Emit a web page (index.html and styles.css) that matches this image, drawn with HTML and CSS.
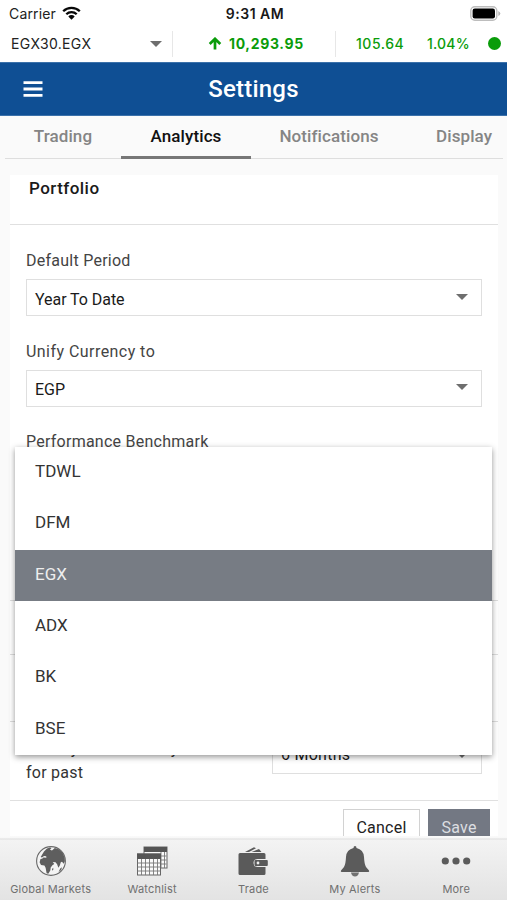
FILE: index.html
```html
<!DOCTYPE html>
<html lang="en">
<head>
<meta charset="utf-8">
<meta name="viewport" content="width=device-width, initial-scale=1">
<title>Settings</title>
<link rel="stylesheet" href="styles.css">
</head>
<body>
<div class="app">
  <div class="status">
    <div class="carrier"><span>Carrier</span>
      <svg width="19" height="14" viewBox="0 0 19 14"><g fill="none" stroke="#080808" stroke-width="2.3"><path d="M1.2 5.2a11.8 11.8 0 0 1 16.6 0"/><path d="M4.3 8.3a7.4 7.4 0 0 1 10.4 0"/></g><path d="M6.3 10.4a4.5 4.5 0 0 1 6.4 0L9.5 13.7z" fill="#080808"/></svg>
    </div>
    <span class="clock">9:31 AM</span>
    <svg class="battery" width="31" height="15" viewBox="0 0 31 15"><rect x=".8" y=".8" width="26" height="13.4" rx="4" fill="#fff" stroke="#bdbdbd" stroke-width="1.4"/><rect x="2.6" y="2.6" width="22.4" height="9.8" rx="2.2" fill="#000"/><path d="M28.3 5v5q2-1 2-2.5t-2-2.5z" fill="#b5b5b5"/></svg>
  </div>
  <div class="ticker">
    <div class="symbol"><span>EGX30.EGX</span><i class="caret"></i></div>
    <div class="price"><svg width="14" height="13" viewBox="0 0 14 13"><path d="M7 12.5V2M1.7 7 7 1.8 12.3 7" fill="none" stroke="#0a9c0a" stroke-width="2.7"/></svg><span>10,293.95</span></div>
    <div class="change"><span class="points">105.64</span><span class="percent">1.04%</span><i class="dot"></i></div>
  </div>
  <header class="header">
    <svg width="20" height="18" viewBox="0 0 20 18"><path d="M.5 2.7h19M.5 9h19M.5 15.4h19" stroke="#fff" stroke-width="2.8"/></svg>
    <h1>Settings</h1>
  </header>
  <nav class="tabs">
    <span class="tab trading">Trading</span>
    <span class="tab active">Analytics</span>
    <span class="tab notifications">Notifications</span>
    <span class="tab display">Display</span>
  </nav>
  <main class="main">
    <section class="card">
      <h2>Portfolio</h2>
      <div class="fields">
        <label>Default Period</label>
        <div class="select"><span>Year To Date</span><i class="caret"></i></div>
        <label class="currency">Unify Currency to</label>
        <div class="select"><span>EGP</span><i class="caret"></i></div>
        <label>Performance Benchmark</label>
      </div>
      <div class="row row-a"></div>
      <div class="row row-b"></div>
      <div class="row row-c"></div>
      <div class="history">
        <p>History Cash Activity<br>for past</p>
        <div class="select"><span>6 Months</span><i class="caret"></i></div>
      </div>
      <div class="actions"><button class="cancel">Cancel</button><button class="save">Save</button></div>
    </section>
    <ul class="menu">
      <li>TDWL</li><li>DFM</li><li class="selected">EGX</li><li>ADX</li><li>BK</li><li>BSE</li>
    </ul>
  </main>
  <footer class="bottom">
    <div class="item"><svg width="32" height="32" viewBox="0 0 32 32"><circle cx="16" cy="16" r="14.4" fill="#f4f4f4" stroke="#686868" stroke-width="1.1"/><path fill="#5e5e5e" d="M9 6.500 12 3.500l3-.9 1.500.5-1.500 1.700 2 .6 2.800-2.300 4 1.100 3.800 3.600 2.100 4.600.2 3.800-1.200 2.600-1.700-2-1.200.5-1 3.200-1.400 2.300-1.300-3.500-1.600-2-2.800-.4 1.600 2-2.400 1.700-1.800-4-3.600-.3-2-1.300-2.100.5-.8-1.300 1.800-1.600 3 .2-.2-1.500-2.200-.3-2 1.500-1.300-.6zM5.500 14l4-.8 5.200 1.600 1.500 3.800 2 .7-2.500 3.200-.4 3-2 3.300-1.700-.5-1-5.600-1.200-2.200-3.400-.5-1.400-2.700zM17 24l1.200-1.300.2 1.900-1 1.200zM25.200 23.500l1.800-1.200-.8 2.700-2.700 2.300z"/></svg><span>Global Markets</span></div>
    <div class="item"><svg width="32" height="32" viewBox="0 0 32 32"><rect x="8" y="2" width="23" height="21" fill="#fafafa" stroke="#666"/><path d="M8 2h23v5H8z" fill="#555"/><path d="M8.5 11h22m-22 4h22m-22 4h22M25 7v16m3.5-16v16" stroke="#777" stroke-width=".9"/><rect x="1.5" y="9" width="23" height="21" fill="#fafafa" stroke="#666"/><path d="M1 8.500h24v5.500H1z" fill="#555"/><path d="M1.500 18h23m-23 4h23m-23 4h23M5.500 14v16m4-16v16m4-16v16m4-16v16m4-16v16" stroke="#777" stroke-width=".9"/></svg><span>Watchlist</span></div>
    <div class="item"><svg width="32" height="32" viewBox="0 0 32 32"><path fill="#5a5a5a" d="M1.500 9.500q0-1.500 1.500-1.500h24q1.500 0 1.500 1.500V14h-8q-4 0-4 4t4 4h8v6.500q0 1.500-1.500 1.500H3q-1.500 0-1.500-1.500z"/><rect x="17.500" y="15" width="13.300" height="6" rx="1" fill="#5a5a5a"/><circle cx="21" cy="18" r="1.400" fill="#eee"/><path fill="#5a5a5a" d="M8 7 17 2.300l2 .9L12 7zM14.500 7l7.500-3 2.500 3z"/></svg><span>Trade</span></div>
    <div class="item"><svg width="32" height="32" viewBox="0 0 32 32"><path fill="#5b5b5b" d="M14.500 3q0-2 1.500-2t1.500 2q7 1.500 7.500 9 .3 7 2 10l3 3.500q.8 1.500-1 1.500H3q-1.800 0-1-1.500L5 22q1.700-3 2-10 .5-7.500 7.500-9z"/><path fill="#707070" d="M12 27.500h8q-.8 4-4 4t-4-4z"/></svg><span>My Alerts</span></div>
    <div class="item"><svg width="32" height="32" viewBox="0 0 32 32"><g fill="#5b5b5b"><circle cx="5.300" cy="16" r="3.600"/><circle cx="16" cy="16" r="3.600"/><circle cx="26.700" cy="16" r="3.600"/></g></svg><span>More</span></div>
  </footer>
</div>
</body>
</html>
```
FILE: styles.css
```css
* { box-sizing: border-box; }
body { margin: 0; background: #fafafa; font-family: Roboto, "Liberation Sans", sans-serif; color: #333; }
.app { width: 507px; height: 900px; display: flex; flex-direction: column; overflow: hidden; background: #fafafa; }
svg { display: block; flex: none; }

.status { height: 28px; flex: none; display: grid; grid-template-columns: 1fr auto 1fr; align-items: center; padding: 0 6px 0 9px; background: #fff; font: 400 14px/28px Inter, sans-serif; color: #222; }
.carrier { display: flex; align-items: center; gap: 6px; letter-spacing: .15px; }
.carrier svg { margin-top: -3px; }
.clock { font-weight: 600; font-size: 14px; letter-spacing: .5px; color: #181818; }
.battery { justify-self: end; margin-top: -2px; }

.caret { width: 0; height: 0; border: 6px solid transparent; border-top: 6px solid #6e6e6e; border-bottom: 0; flex: none; }
.ticker { height: 34px; flex: none; display: flex; align-items: center; padding-bottom: 3px; background: #fff; font: 400 14px/26px Inter, sans-serif; color: #0a9c0a; }
.symbol { width: 173px; height: 26px; padding: 0 10px 0 11px; display: flex; align-items: center; justify-content: space-between; border-right: 1px solid #e7e7e7; color: #222; letter-spacing: .3px; }
.price { width: 163px; height: 26px; display: flex; align-items: center; padding-left: 35px; gap: 7px; font-weight: 700; letter-spacing: .65px; border-right: 1px solid #e7e7e7; }
.change { flex: 1; display: flex; align-items: center; padding: 0 6px 0 20px; font-weight: 500; }
.points { width: 71px; letter-spacing: .55px; }
.percent { letter-spacing: .2px; }
.dot { width: 13px; height: 13px; margin-left: auto; border-radius: 50%; background: #0a9c0a; }

.header { height: 54px; flex: none; display: grid; grid-template-columns: 1fr auto 1fr; align-items: center; padding: 0 23px; background: #0f4f94; border-top: 1px solid #3b71aa; border-bottom: 1px solid #3b71aa; color: #fff; }
.header h1 { margin: 0; font-size: 24px; font-weight: 500; line-height: 50px; letter-spacing: .2px; }

.tabs { height: 43px; flex: none; display: flex; margin: 0 4px 0 5px; border-bottom: 1px solid #dedede; font-size: 17px; font-weight: 500; line-height: 41px; color: #858585; letter-spacing: .1px; }
.tab { height: 43px; text-align: center; white-space: nowrap; flex: none; }
.trading { width: 116px; }
.active { width: 130px; color: #111; border-bottom: 3px solid #777; }
.notifications { width: 156px; }
.display { width: 90px; padding-left: 29px; text-align: left; }

.main { position: relative; height: 677px; flex: none; padding: 16px 9px 0 10px; overflow: hidden; }
.card { height: 661px; background: #fff; font-size: 16px; letter-spacing: .25px; }
.card h2 { height: 50px; margin: 0; padding-left: 19px; border-bottom: 1px solid #e0e0e0; font-size: 17px; font-weight: 500; line-height: 27px; letter-spacing: .45px; color: #1a1a1a; }
.fields { height: 376px; padding: 24px 16px 0; display: flex; flex-direction: column; border-bottom: 1px solid #ddd; }
.fields label { height: 24px; line-height: 24px; margin-bottom: 6px; color: #444; }
.fields .currency { letter-spacing: .45px; line-height: 23px; }
.select { height: 37px; display: flex; align-items: center; justify-content: space-between; padding: 3px 13px 0 8px; border: 1px solid #dfdfdf; color: #1a1a1a; background: #fff; letter-spacing: -.05px; }
.select .caret { margin-top: -5px; }
.fields .select { margin-bottom: 23.500px; flex: none; }
.row { border-bottom: 1px solid #ddd; background: #fff; }
.row-a { height: 54px; }
.row-b { height: 67px; }
.row-c { height: 14px; border: 0; }
.history { height: 65px; display: flex; justify-content: space-between; padding: 1px 16px 0; border-bottom: 1px solid #e0e0e0; }
.history p { margin: 0; line-height: 24px; color: #333; }
.history .select { width: 210px; padding-top: 0; padding-bottom: 3px; letter-spacing: .25px; }
.history .caret { margin-top: 1px; }
.actions { height: 36px; display: flex; justify-content: flex-end; gap: 8px; padding: 8px 8px 0 0; overflow: hidden; }
.actions button { height: 37px; padding: 0; border: 1px solid #d2d2d2; border-radius: 0; background: #fff; font: 400 16px/35px Roboto, sans-serif; letter-spacing: .25px; color: #222; flex: none; }
.actions .cancel { width: 77px; }
.actions .save { width: 62px; border-color: #737883; background: #737883; color: #dcdee1; }

.menu { position: absolute; left: 15px; top: 288px; width: 477px; height: 308px; margin: 0; padding: 0; list-style: none; background: #fff; box-shadow: 0 2px 6px rgba(0,0,0,.42); font-size: 17px; overflow: hidden; }
.menu li { height: 51.330px; padding-left: 20px; line-height: 49.500px; color: #333; }
.menu .selected { background: #777c84; color: #eee; }

.bottom { height: 64px; flex: none; display: grid; grid-template-columns: repeat(5, 1fr); padding-top: 9px; background: linear-gradient(#fafafa 0, #f7f7f7 2px, #dedede 3px, #f3f3f3 4px, #e3e3e3); font: 400 11px/14px Inter, sans-serif; letter-spacing: .2px; color: #707070; }
.item { display: flex; flex-direction: column; align-items: center; gap: 5px; }
```
